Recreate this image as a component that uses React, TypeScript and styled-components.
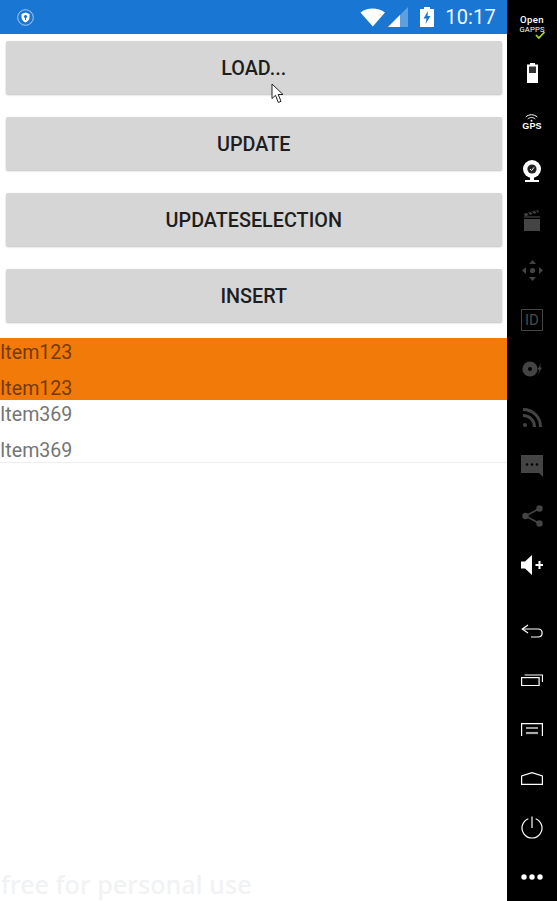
import React from "react";
import styled, { createGlobalStyle } from "styled-components";

const Global = createGlobalStyle`
  html, body { margin: 0; padding: 0; background: #fff; }
  body { font-family: Roboto, "Liberation Sans", sans-serif; overflow: hidden; }
  * { box-sizing: border-box; }
`;

const Screen = styled.div`
  display: flex;
  width: 557px;
  height: 901px;
  position: relative;
  overflow: hidden;
`;
const Phone = styled.main`
  width: 507px;
  display: flex;
  flex-direction: column;
  position: relative;
  background: #fff;
`;
const StatusBar = styled.header`
  height: 34px;
  background: #1976d2;
  color: #fff;
  display: flex;
  align-items: center;
  padding: 0 11px 0 17px;
  flex-shrink: 0;
`;
const StatusRight = styled.div`
  margin-left: auto;
  display: flex;
  align-items: center;
`;
const Clock = styled.span`
  font-size: 20px;
  letter-spacing: 0.2px;
  margin-left: 11px;
  color: #f2f7fc;
`;
const Buttons = styled.div`
  padding: 7px 5px 0 5.5px;
  display: flex;
  flex-direction: column;
  gap: 23px;
`;
const ActionButton = styled.button`
  height: 53px;
  border: 0;
  border-radius: 2px;
  background: #d6d6d6;
  box-shadow: 0 1px 2px rgba(0, 0, 0, 0.26);
  color: #1e1e1e;
  font-family: Roboto, sans-serif;
  font-weight: 500;
  font-size: 19.8px;
  padding: 2px 0 0;
`;
const List = styled.div`
  margin-top: 16px;
`;
const Row = styled.div<{ $selected?: boolean }>`
  height: ${(p) => (p.$selected ? "62px" : "63px")};
  background: ${(p) => (p.$selected ? "#f27a08" : "#fff")};
  color: ${(p) => (p.$selected ? "#743a04" : "#757575")};
  border-bottom: ${(p) => (p.$selected ? "0" : "1px solid #eeeeee")};
  font-size: 19.6px;
  line-height: 24px;
  display: flex;
  flex-direction: column;
  gap: 12px;
  padding-top: 3px;
`;
const Watermark = styled.div`
  position: absolute;
  left: 1px;
  top: 867px;
  font-family: "Noto Sans", sans-serif;
  font-weight: 500;
  font-size: 25.2px;
  line-height: 34px;
  color: #f1f2f3;
  white-space: nowrap;
`;
const Cursor = styled.svg`
  position: absolute;
  left: 271px;
  top: 83px;
`;
const Sidebar = styled.aside`
  width: 50px;
  background: #000;
  display: flex;
  flex-direction: column;
  gap: 16px;
  flex-shrink: 0;
`;
const SideGroup = styled.div`
  display: flex;
  flex-direction: column;
`;
const Slot = styled.div<{ $dim?: boolean }>`
  height: 49.2px;
  display: flex;
  align-items: center;
  justify-content: center;
  color: ${(p) => (p.$dim ? "#444" : "#fff")};
  position: relative;
`;
const GappsLabel = styled.div`
  display: flex;
  flex-direction: column;
  align-items: center;
  font-family: Roboto, sans-serif;
  color: #fff;
  line-height: 10px;
  font-size: 9.6px;
  font-weight: 500;
  letter-spacing: 0.4px;
  position: relative;
  top: 0;
`;
const GappsSmall = styled.span`
  font-size: 7.6px;
  font-weight: 400;
  letter-spacing: 0.2px;
`;
const Check = styled.svg`
  position: absolute;
  right: 0;
  bottom: -4px;
`;
const GpsLabel = styled.div`
  display: flex;
  flex-direction: column;
  align-items: center;
  font-family: "Liberation Sans", sans-serif;
  font-size: 9px;
  line-height: 9px;
  font-weight: 700;
  letter-spacing: 0.2px;
`;
const IdBox = styled.div`
  width: 22px;
  height: 22px;
  border: 1.5px solid #444;
  display: flex;
  align-items: center;
  justify-content: center;
  font-family: Roboto, sans-serif;
  font-size: 15px;
  color: #4a4a4a;
`;

export default function App() {
  return (
    <Screen>
      <Global />
      <Phone>
        <StatusBar>
          <svg width="17" height="17" viewBox="0 0 17 17">
            <circle cx="8.5" cy="8.5" r="7.8" fill="none" stroke="#cfe2f5" strokeWidth="0.8" />
            <path d="M8.5 3.5 L12.5 5 V8.5 C12.5 11 10.5 12.6 8.5 13.5 C6.5 12.6 4.5 11 4.5 8.5 V5 Z" fill="#fff" />
            <circle cx="8.5" cy="7.5" r="1.6" fill="#1976d2" />
            <rect x="8" y="8" width="1" height="3" fill="#1976d2" />
          </svg>
          <StatusRight>
            <svg width="26" height="19" viewBox="0 0 26 19">
              <path d="M0.5 4.5 C7 -0.8 18 -0.8 25 4.5 L12.8 18.5 Z" fill="#fff" />
            </svg>
            <svg width="20" height="20" viewBox="0 0 20 20" style={{ marginLeft: 2 }}>
              <path d="M0 20 L20 0 V20 Z" fill="#fff" fillOpacity="0.3" />
              <path d="M0 20 L12 8 V20 Z" fill="#fff" />
            </svg>
            <svg width="14" height="20" viewBox="0 0 14 20" style={{ marginLeft: 12 }}>
              <path d="M4 0 H10 V2 H14 V20 H0 V2 H4 Z" fill="#fff" />
              <path d="M8 4 L3.5 11.5 H6.5 L5.5 17 L10.5 9 H7.5 Z" fill="#1976d2" />
            </svg>
            <Clock>10:17</Clock>
          </StatusRight>
        </StatusBar>
        <Buttons>
          <ActionButton>LOAD...</ActionButton>
          <ActionButton>UPDATE</ActionButton>
          <ActionButton>UPDATESELECTION</ActionButton>
          <ActionButton>INSERT</ActionButton>
        </Buttons>
        <List>
          <Row $selected>
            <span>Item123</span>
            <span>Item123</span>
          </Row>
          <Row>
            <span>Item369</span>
            <span>Item369</span>
          </Row>
        </List>
        <Watermark>free for personal use</Watermark>
        <Cursor width="14" height="21" viewBox="0 0 14 21">
          <path d="M1 1 V15.5 L4.5 12.3 L7.3 19.5 L10 18.3 L7.2 11.5 H12 Z" fill="#fff" stroke="#222" strokeWidth="1" />
        </Cursor>
      </Phone>
      <Sidebar>
        <SideGroup>
          <Slot>
            <GappsLabel>
              <span>Open</span>
              <GappsSmall>GAPPS</GappsSmall>
              <Check width="10" height="8" viewBox="0 0 10 8">
                <path d="M1 4 L3.8 7 L9.5 1" fill="none" stroke="#a6d22e" strokeWidth="1.8" />
              </Check>
            </GappsLabel>
          </Slot>
          <Slot>
            <svg width="11" height="20" viewBox="0 0 11 20" style={{ marginTop: -2 }}>
              <path d="M3 0 H8 V1.5 H11 V20 H0 V1.5 H3 Z" fill="#fff" />
              <rect x="2" y="3.5" width="7" height="6.5" fill="#333" />
            </svg>
          </Slot>
          <Slot>
            <GpsLabel>
              <svg width="13" height="8" viewBox="0 0 13 8">
                <path d="M0.7 3 C4 0 9 0 12.3 3 M2.7 5 C5 3 8 3 10.3 5" fill="none" stroke="#fff" strokeWidth="1" />
                <circle cx="6.5" cy="6.7" r="1" fill="#fff" />
              </svg>
              <span>GPS</span>
            </GpsLabel>
          </Slot>
          <Slot>
            <svg width="18" height="22" viewBox="0 0 18 22" style={{ marginTop: -2 }}>
              <circle cx="9" cy="9" r="9" fill="#fff" />
              <circle cx="9" cy="9" r="4.6" fill="#222" />
              <path d="M7 9 L8.6 10.6 L11 7.4" fill="none" stroke="#fff" strokeWidth="1" />
              <rect x="7" y="17" width="4" height="3" fill="#fff" />
              <rect x="2" y="20" width="14" height="2" fill="#fff" />
            </svg>
          </Slot>
          <Slot $dim>
            <svg width="16" height="21" viewBox="0 0 16 21" fill="#444" style={{ marginTop: -1 }}>
              <rect x="0" y="9" width="16" height="12" />
              <path d="M0 6 H16 V8 H0 Z" fill="#2a2a2a" />
              <path d="M0 3.8 L14 0 L14.8 2.4 L0.8 6.2 Z" />
              <path d="M3.5 3 L5.5 5 M7.5 2 L9.5 4 M11.5 1 L13.5 3" stroke="#000" strokeWidth="1.2" />
            </svg>
          </Slot>
          <Slot $dim>
            <svg width="23" height="23" viewBox="0 0 23 23" fill="#444" style={{ marginTop: -1 }}>
              <circle cx="11.5" cy="11.5" r="2.6" />
              <path d="M11.5 1 L15 5 H8 Z M11.5 22 L15 18 H8 Z M1 11.5 L5 8 V15 Z M22 11.5 L18 8 V15 Z" />
            </svg>
          </Slot>
          <Slot $dim>
            <IdBox>ID</IdBox>
          </Slot>
          <Slot $dim>
            <svg width="21" height="16" viewBox="0 0 21 16">
              <circle cx="8" cy="8" r="7.6" fill="#444" />
              <circle cx="8" cy="8" r="2" fill="#000" />
              <path d="M19 2 L15.5 8.6 H17.5 L16 13.5 L20 6.6 H18 Z" fill="#444" />
            </svg>
          </Slot>
          <Slot $dim>
            <svg width="19" height="19" viewBox="0 0 19 19" fill="none" stroke="#444" strokeWidth="3" style={{ marginTop: -2 }}>
              <path d="M0 1.5 C10 1.5 17.5 9 17.5 19" />
              <path d="M0 7.5 C6.5 7.5 11.5 12.5 11.5 19" />
              <circle cx="2" cy="17" r="2" fill="#444" stroke="none" />
            </svg>
          </Slot>
          <Slot $dim>
            <svg width="22" height="22" viewBox="0 0 22 22" style={{ marginTop: -2 }}>
              <path d="M0 0 H22 V22 L18 18 H0 Z" fill="#444" />
              <circle cx="6" cy="9.5" r="1.2" fill="#000" />
              <circle cx="11" cy="9.5" r="1.2" fill="#000" />
              <circle cx="16" cy="9.5" r="1.2" fill="#000" />
            </svg>
          </Slot>
          <Slot $dim>
            <svg width="21" height="22" viewBox="0 0 21 22" fill="#444" style={{ marginTop: -1 }}>
              <circle cx="17.5" cy="3.5" r="3.2" />
              <circle cx="3.5" cy="11" r="3.2" />
              <circle cx="17.5" cy="18.5" r="3.2" />
              <path d="M17.5 3.5 L3.5 11 L17.5 18.5" fill="none" stroke="#444" strokeWidth="1.5" />
            </svg>
          </Slot>
          <Slot>
            <svg width="22" height="20" viewBox="0 0 22 20" fill="#fff" style={{ marginTop: -2 }}>
              <path d="M0 6.5 H4 L11 0 V20 L4 13.5 H0 Z" />
              <path d="M14.5 9 H17.5 V6 H19.5 V9 H22 V11 H19.5 V14 H17.5 V11 H14.5 Z" />
            </svg>
          </Slot>
        </SideGroup>
        <SideGroup>
          <Slot>
            <svg width="22" height="14" viewBox="0 0 22 14" fill="none" stroke="#fff" strokeWidth="1.2">
              <path d="M7 1 L1.3 5 L7 9" />
              <path d="M1.5 5 H17 C22.5 5 22.5 13 17 13 H10" />
            </svg>
          </Slot>
          <Slot>
            <svg width="22" height="12" viewBox="0 0 22 12" fill="none" stroke="#fff" strokeWidth="1.2">
              <rect x="0.6" y="3.6" width="17.5" height="8" />
              <path d="M3.5 1 H21.5 V8" />
            </svg>
          </Slot>
          <Slot>
            <svg width="22" height="13" viewBox="0 0 22 13" fill="none" stroke="#fff">
              <path d="M0.6 13 V0.6 H21.4 V13" strokeWidth="1.2" />
              <path d="M5 5 H17" strokeWidth="1.2" />
              <path d="M5 10 H17" strokeWidth="2.2" stroke="#aaa" />
            </svg>
          </Slot>
          <Slot>
            <svg width="22" height="13" viewBox="0 0 22 13" fill="none" stroke="#fff" strokeWidth="1.2">
              <path d="M0.6 12.4 V4 L11 0.7 L21.4 4 V12.4 Z" />
            </svg>
          </Slot>
          <Slot>
            <svg width="22" height="23" viewBox="0 0 22 23" fill="none" stroke="#fff" strokeWidth="1.2">
              <path d="M7.3 2.7 A10 10 0 1 0 14.7 2.7" />
              <path d="M11 0.5 V12" />
            </svg>
          </Slot>
          <Slot>
            <svg width="22" height="6" viewBox="0 0 22 6" fill="#fff">
              <circle cx="3" cy="3" r="2.7" />
              <circle cx="11" cy="3" r="2.7" />
              <circle cx="19" cy="3" r="2.7" />
            </svg>
          </Slot>
        </SideGroup>
      </Sidebar>
    </Screen>
  );
}
